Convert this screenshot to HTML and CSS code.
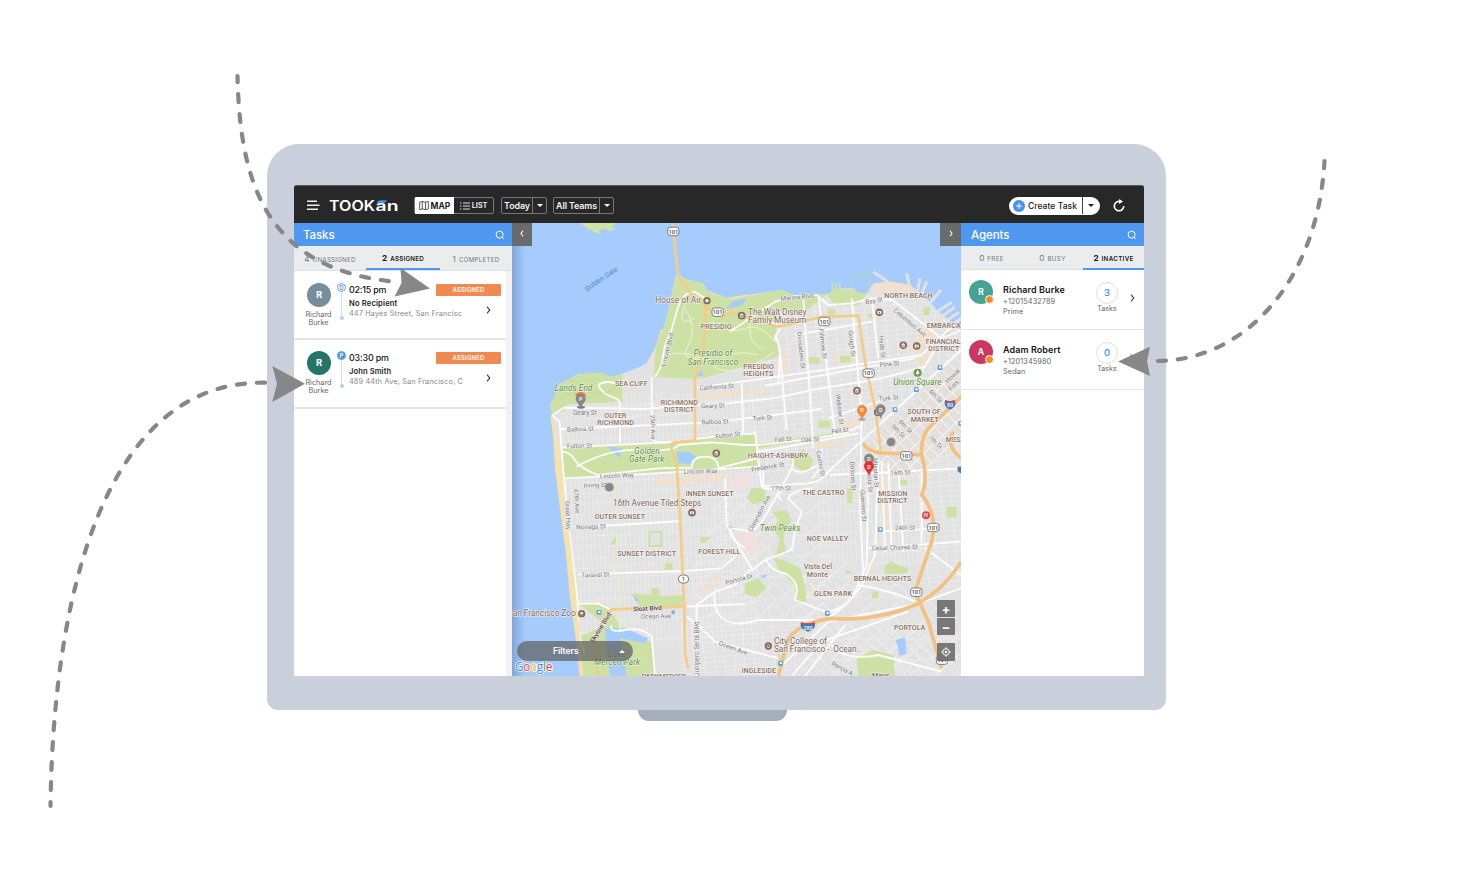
FILE: index.html
```html
<!DOCTYPE html>
<html lang="en">
<head>
<meta charset="utf-8">
<title>Tookan</title>
<link rel="stylesheet" href="styles.css">
</head>
<body>
<div class="stage">
<div class="monitor">
<div class="screen">
  <header class="topbar">
    <svg class="burger" width="13" height="11" viewBox="0 0 13 11"><path d="M0 1.2h10M0 5.2h12.5M0 9.2h11" stroke="#eee" stroke-width="1.4"/></svg>
    <svg class="logo" width="70" height="15" viewBox="0 0 70 15"><text x="0" y="13" class="logo-text" textLength="46" lengthAdjust="spacingAndGlyphs">TOOK</text><text x="46.5" y="13" class="logo-text" textLength="23" lengthAdjust="spacingAndGlyphs">an</text><path d="M47.5 5.2q1-3 4-3h6.500q-.5 2.400-3 2.700z" fill="#3f92f5"/></svg>
    <div class="toggle">
      <span class="seg on"><svg width="10" height="9" viewBox="0 0 10 9" fill="none" stroke="#333" stroke-width=".8"><path d="M.7 1.200 3.300.5v7.500l-2.600.7zM3.300.5 6.500 1.200v7.500L3.300 8M6.500 1.200 9.300.5V8l-2.800.7"/></svg>MAP</span>
      <span class="seg"><svg width="10" height="8" viewBox="0 0 10 8"><path d="M0 1h1.500M0 4h1.500M0 7h1.500M3 1h7M3 4h7M3 7h7" stroke="#ddd" stroke-width="1"/></svg>LIST</span>
    </div>
    <div class="drop today"><span>Today</span><i><b></b></i></div>
    <div class="drop teams"><span>All Teams</span><i><b></b></i></div>
    <div class="create"><svg width="12" height="12" viewBox="0 0 12 12"><circle cx="6" cy="6" r="6" fill="#4592ef"/><path d="M6 3v6M3 6h6" stroke="#fff" stroke-width="1"/></svg><span>Create Task</span><i><b></b></i></div>
    <svg class="refresh" width="12" height="13" viewBox="0 0 12 13"><path d="M10.700 7a4.700 4.700 0 1 1-4.700-4.600h2" fill="none" stroke="#fff" stroke-width="1.600"/><path d="M6 0l4 2.500L6 5z" fill="#fff"/></svg>
  </header>
  <main class="work">
    <section class="panel tasks">
      <div class="title"><h1>Tasks</h1><svg width="10" height="10" viewBox="0 0 10 10" fill="none" stroke="#fff"><circle cx="4.600" cy="4.600" r="3.500"/><path d="M7 7l2 2"/></svg></div>
      <nav class="tabs"><span>4 <small>UNASSIGNED</small></span><span class="on">2 <small>ASSIGNED</small></span><span>1 <small>COMPLETED</small></span></nav>
      <article class="task">
        <div class="who"><b class="face slate">R</b><span>Richard<br>Burke</span></div>
        <div class="rail"><em>D</em><i></i><u></u></div>
        <div class="info"><strong>02:15 pm</strong><b>No Recipient</b><span>447 Hayes Street, San Francisc</span></div>
        <div class="state"><span>ASSIGNED</span><svg width="5" height="8" viewBox="0 0 5 8"><path d="M1 .7l2.800 3.300L1 7.300" fill="none" stroke="#444" stroke-width="1.200"/></svg></div>
      </article>
      <article class="task second">
        <div class="who"><b class="face green">R</b><span>Richard<br>Burke</span></div>
        <div class="rail"><em class="full">P</em><i></i><u></u></div>
        <div class="info"><strong class="later">03:30 pm</strong><b class="john">John Smith</b><span>489 44th Ave, San Francisco, C</span></div>
        <div class="state"><span>ASSIGNED</span><svg width="5" height="8" viewBox="0 0 5 8"><path d="M1 .7l2.800 3.300L1 7.300" fill="none" stroke="#444" stroke-width="1.200"/></svg></div>
      </article>
    </section>
    <section class="mapbox">
<svg class="map" width="449" height="453" viewBox="-99 -336 1347 1359">
<defs>
<path id="land" d="M22 240L15 208 32 180 42 148 100 118 165 113 200 125 235 115 285 96 312 80 332 38 360-35 376-100 390-170 398-187 415-170 450-160 475-155 490-128 560-107 640-125 710-135 745-120 850-122 870-138 900-140 925-140 940-125 965-125 985-155 1040-160 1095-150 1135-120 1175-75 1248-15V1023H115L98 830 78 640 62 520 46 350z"/>
<pattern id="grid" width="13" height="32" patternUnits="userSpaceOnUse" patternTransform="rotate(-3)"><path d="M0 0H13M0 0V32" stroke="#f4f4f4" stroke-width="2.200"/></pattern>
<pattern id="grid2" width="30" height="15" patternUnits="userSpaceOnUse" patternTransform="rotate(-5)"><path d="M0 0H30M0 0V15" stroke="#f4f4f4" stroke-width="2.400"/></pattern>
<pattern id="soma" width="27" height="36" patternUnits="userSpaceOnUse" patternTransform="rotate(-44)"><path d="M0 0H27M0 0V36" stroke="#fcfcfc" stroke-width="4"/></pattern>
<pattern id="hill" width="74" height="62" patternUnits="userSpaceOnUse"><path d="M0 14Q25-7 40 20T74 14M13 0Q-7 28 17 42T13 62M43 62Q28 42 54 34T57 0M0 48Q37 34 74 48" fill="none" stroke="#f0f0f0" stroke-width="2.200"/></pattern>
<clipPath id="cl"><use href="#land"/></clipPath>
<g id="s101"><rect x="-17" y="-12" width="34" height="25" rx="8" fill="#fff" stroke="#666" stroke-width="2.500"/><text y="7" text-anchor="middle" class="sh">101</text></g>
<g id="tr"><rect x="-7" y="-7" width="14" height="14" rx="2" fill="#5b9be8"/><rect x="-3" y="-4" width="7" height="6" fill="#fff"/></g>
<g id="poi"><circle r="11.500" fill="#886d5d"/><path d="M-6 5h12M-5-2L0-6 5-2zM-4-1v5M0-1v5M4-1v5" stroke="#fff" stroke-width="1.700" fill="#fff"/></g>
<g id="cam"><circle r="11.500" fill="#886d5d"/><path d="M-6-3l5-2 1 2 6-1v8l-12 1z" fill="#fff"/><circle cy="1" r="2.500" fill="#886d5d"/></g>
<path id="pin" d="M0 24C-3 12-15 6-15-5A15 15 0 0 1 15-5C15 6 3 12 0 24z"/>
<linearGradient id="shade"><stop offset="0" stop-color="#426a99" stop-opacity=".38"/><stop offset="1" stop-color="#426a99" stop-opacity="0"/></linearGradient>
</defs>
<rect x="-99" y="-336" width="1347" height="1359" fill="#a6ccfd"/>
<path d="M105-336H212L200-322 215-318 195-312 178-318 160-315 170-300 150-308 130-318z" fill="#cfe3a8"/>
<path d="M15 238L24 300 30 400 45 520 62 650 75 790 95 930 104 1023H125L110 850 90 650 75 540 58 420 48 250z" fill="#f6e1ad"/>
<path d="M310 83L335 40 352-15M490-128L545-106 600-116 680-120" stroke="#f6e1ad" stroke-width="9" fill="none"/>
<use href="#land" fill="#e2e2e2"/>
<g fill="none" stroke="#e1e1e1" stroke-width="9"><path d="M985-190l45 32M1085-185l8 35M1125-170l-8 40M1145-160l-18 45M1188-135l-38 45M1220-98l-45 30M1230-84l-45 32M1242-68l-45 30M1250-50l-45 30"/></g>
<path d="M862-160v25M873-158v25M884-158v22" stroke="#cfe3a8" stroke-width="5"/>
<path d="M925-135A28 28 0 1 1 970-140" fill="none" stroke="#bcd9a5" stroke-width="3"/>
<g clip-path="url(#cl)">
<path d="M40 175H640V930H90z" fill="url(#grid)"/><path d="M590-120H1248V420H640z" fill="url(#grid2)"/><path d="M820 400H1130V690H820z" fill="url(#grid)"/><path d="M530 440H860V860H440V700z" fill="url(#hill)"/><path d="M400 860H760V1023H400zM1120 420H1248V760H1120z" fill="url(#grid2)"/><path d="M760 680H1100L1090 810 760 1023zM860 860H1248V1023H860z" fill="url(#hill)"/><path d="M850 850l390-60V1023H760z" fill="url(#soma)" opacity=".4"/>
<path d="M900 400L1248 55V300L1130 420z" fill="#e3e0dc"/><path d="M900 400L1248 55V300L1130 420z" fill="url(#soma)"/>
<g fill="#f6dfc3" opacity=".75"><path d="M990-160h120l-10 28-110 8zM560-100l130-18v14l-130 25zM1090 40l75-80 20 15-60 90zM1010 430h18v150h-18zM980 660l12 0-18 80h-12zM460 178l210-18v12l-210 22zM330 432l210-12v18l-210 12zM260 708l160-8v8l-160 8zM700 60h28v60h-28zM870 60h60v22h-60zM880 255h60v20h-60zM800 325l100-10v15l-100 12zM455 775l70-65 8 8-70 65zM1110 75l40-20 10 15-40 30z"/></g>
<path d="M545 450l25-28 50-5-10 35-35 20zM565 590l55-15 30 70-35 15-25-20zM640 290h-35v35h35zM1130 510l18-15 20 45-30 20zM90 175h45v30H90z" fill="#f1e0e2"/>
<g fill="#cee1a4">
<path d="M395-187L415-170 475-155 490-128 560-107 600-116 700-135 850-125 775-65 745-70 640-80 690-60 700 50 715 60 480 128 440 132 325 125 332 38 376-100z"/>
<path d="M845-122L870-138 975-135 940-90 870-88zM10 100H232V200L66 208 60 225 15 245z"/>
<path d="M48 337L370 322 630 292 638 400 60 430z"/>
<path d="M636 326L900 290 900 300 640 340zM100 805l80 2 55 75 85 40 10 100H110L105 905 180 870z"/>
<path d="M258 775l62 5-3-20 23-2 4 25 74-3v32l-130 12zM360 683h22v22h-22zM465 605h32l-15 18h-15zM600 745l40-15 24 30-30 28-35-12zM680 530l45-5 15 30-20 30-5 30 10 40-35 5 15-45-20-35 15-25zM685 670l30 5 50 25 18 65 0 35-30 5-5-55-45-45zM605 490l15-30 38-2 5 40-40 10zM735 365l40-20 30 30-15 35-35-10zM820 257h36v22h-36zM790 67h33v20h-33zM885 62h32v20h-32zM848-77h22v15h-22zM907 460h16v45h-16zM1020 690l18-10 50 20 0 15-70 3zM980 775l20-8 0 22-18 2zM935 970l50-25 60 15 5 63H940zM1205 515h30v32h-30zM1065 435h20v15h-20zM900 708h18v8h-18zM970-65h18v15h-18zM1135-85h20v25h-20zM1200-10h12v12h-12zM205 610h12l-8 20h-12zM720 990l-25 5 5-45z"/>
</g>
<path d="M313 591h36v42h-36z" fill="#e2e2e2" stroke="#cee1a4" stroke-width="6"/>
<path d="M190 335l20 0 20 28-10 5zM395 350l40 0 18 15-15 22-38-2zM180 880l60 0 70 30-10 15-75-15 20 112h-50l-10-80zM265 780l20 18-15 0zM545 570l30 10-20 15zM1052 915l28-8 5 50-22 5-5-30zM650 720h18l-8 8h-12zM460 115l10-10 5 18h-20zM210 340h25l-10 12h-15zM560-100l45-10-12 20-50 12z" fill="#a6ccfd"/>
<g fill="none" stroke="#edf1d8" stroke-width="3"><path d="M420-80Q460-20 430 30T480 70M360 60Q440 40 500 90T690 50M500-40Q560 0 600-20T690 20M620-60Q600 20 650 40M420-90Q390-20 450-50M520 80Q560 40 640 60"/><path d="M30 140Q80 120 120 160T220 150M45 190Q90 160 140 190" stroke="#b9cc8e" stroke-width="1.600"/></g>
<g class="w">
<path d="M20 242L56 218 300 222 380 215 545 205 700 188 800 165 1010 130 1140 95M22 242L44 260 50 350 65 520 80 650 98 800 100 890 120 960M48 282L500 262 830 222M50 338L370 322 510 305 630 295M60 430L330 415 640 395M640 330L800 312 900 295 950 270M636 350L700 340 940 295"/>
<path d="M50 350Q75 350 90 375T160 420M95 395Q190 340 290 345T400 330L500 322 600 330 640 330M160 420L340 400 440 398Q440 365 480 365T520 400L635 370"/>
<path d="M160 150q20-15 50-5M160 150Q170 175 200 185T225 215V325M320 125V300q-2 30 60 20M330 125Q350 100 355 60T375 0L395-70Q410-130 450-130L480-110M590 145l5 150M630 290l20 165 140-10Q830 440 850 410L1248 45"/>
<path d="M705 50l20 235M690 0q15 30 15 60L700 150M700 20Q680 15 700-10T660-40M775-110l30 450M820-120l50 420M920-110l30 360-5 250 10 230M980-110l20 180M555-10L690-100 780-125 815-120 850-90 920-95 980-110 1040-105M980-40L750 0M455 158L700 125 1130 60M660 152L1110 70M850 250L1060 180"/>
<path d="M1030-115L1190 10 1248-15M1130 60L1248-50M1190 10L1130 110"/>
<path d="M210 430L225 890" stroke="#e4edc9"/><path d="M90 578L410 558M98 718L420 708 530 700 570 665M100 806L160 806 200 825M540 430L545 570 590 650 620 700"/>
<path d="M620 710Q640 680 700 660L740 645 750 590 770 530 730 490Q740 465 800 460M620 700L570 750 510 770 455 810 455 1023M510 770Q500 830 540 855 570 875 640 855H830M660 670Q680 710 720 715 760 740 755 770T750 795L840 830M600 640Q550 610 560 580L620 590"/>
<path d="M655 400V460L710 465Q690 480 710 495M740 350Q750 380 740 400T680 510 620 580M740 400Q770 430 830 380M830 340Q830 410 800 430"/>
<path d="M425 845L470 880 510 920 700 970M425 815L520 810 600 808M840 835Q900 820 925 780L965 690 970 450M855 845Q920 800 950 750L990 660 1000 380M1010 380L1020 650M855 420L1248 400M970 640L1248 620M1000 590L1180 580M1030 380l10 260M1060 400l15 250M1130 400v220M1140 640L1248 720M700 1000Q780 930 850 860L1100 810M940 750Q1050 770 1110 800M740 1023L830 920 1090 830M780 1023L900 870M1110 810L1248 760M860 930Q900 980 1000 960L1190 1010M200 870Q190 895 240 885T320 905L330 1023"/>
</g>
<g class="o"><path d="M390-350L397-185Q430-120 490-80T555-70L700-25 835-55 940-58 960 80 990 220 1008 350M480-90Q485-20 470 60L450 130V315L385 322Q370 330 395 385L405 540 418 815 420 960 430 1000M418 815L200 823Q150 870 150 960L160 1023"/>
<path class="big" d="M955 325Q970 360 1060 355L1130 360Q1150 430 1130 480 1180 540 1160 620L1110 770 1150 860 1190 1000M1130 360Q1125 300 1160 270L1260 175M1248 680Q1200 760 1120 805 1000 860 860 850 770 860 730 910L700 1023M1248 370Q1200 330 1225 290"/></g>
</g>
<g class="o"><path d="M383-336L398-185"/></g>
<rect x="-99" y="-336" width="40" height="1359" fill="url(#shade)"/>
<g class="st">
<text transform="translate(125-130)rotate(-34)" class="sea" textLength="114">Golden Gate</text>
<text transform="translate(362 95)rotate(-76)">Lincoln Blvd</text><text transform="translate(707-102)rotate(-6)">Marina Blvd</text><text transform="translate(962-92)rotate(-10)">Bay St</text><text transform="translate(1044-72)rotate(40)">Columbus Ave</text>
<text transform="translate(756-8)rotate(84)">Divisadero St</text><text transform="translate(822-18)rotate(83)">Fillmore St</text><text transform="translate(910-12)rotate(84)">Gough St</text><text transform="translate(1002 4)rotate(85)">Hyde St</text>
<text transform="translate(1004 96)rotate(-5)">Pine St</text><text transform="translate(464 166)rotate(-4)">California St</text><text transform="translate(468 220)rotate(-2)">Geary St</text><text transform="translate(84 240)">Geary St</text><text transform="translate(66 290)rotate(-2)">Balboa St</text><text transform="translate(66 340)rotate(-2)">Fulton St</text><text transform="translate(470 268)rotate(-2)">Balboa St</text><text transform="translate(623 257)rotate(-4)">Turk St</text><text transform="translate(512 311)rotate(-7)">Fulton St</text><text transform="translate(1002 198)rotate(-5)">Turk St</text><text transform="translate(860 296)rotate(-7)">Fell St</text><text transform="translate(690 322)rotate(-6)">Fell St</text><text transform="translate(768 322)rotate(-4)">Oak St</text><text transform="translate(316 240)rotate(88)">25th Ave</text><text transform="translate(872 178)rotate(83)">Webster St</text><text transform="translate(165 430)rotate(-2)">Lincoln Way</text><text transform="translate(416 417)rotate(-2)">Lincoln Way</text><text transform="translate(116 458)rotate(-2)">Irving St</text><text transform="translate(620 410)rotate(-9)">Frederick St</text><text transform="translate(814 348)rotate(80)">Castro St</text><text transform="translate(678 467)rotate(-2)">17th St</text><text transform="translate(1036 420)rotate(-2)">16th St</text><text transform="translate(915 380)rotate(87)">Dolores St</text><text transform="translate(946 465)rotate(87)">Guerrero St</text><text transform="translate(984 370)rotate(87)">Mission St</text><text transform="translate(965 378)rotate(87)">Valencia St</text><text transform="translate(620 592)rotate(-62)">Clarendon Ave</text><text transform="translate(60 498)rotate(87)">Great Hwy</text><text transform="translate(86 462)rotate(86)">47th Ave</text><text transform="translate(94 583)rotate(-2)">Noriega St</text><text transform="translate(110 727)rotate(-2)">Taraval St</text><text transform="translate(1050 586)rotate(-2)">24th St</text><text transform="translate(981 646)rotate(-2)">Cesar Chavez St</text><text transform="translate(543 750)rotate(-15)">Portola Dr</text><text transform="translate(288 851)rotate(-1)">Ocean Ave</text><text transform="translate(520 930)rotate(20)">Ocean Ave</text><text transform="translate(462 1023)rotate(-90)">Junipero Serra Blvd</text><text transform="translate(858 990)rotate(28)">Persia A</text><text transform="translate(1150 170)rotate(45)">4th St</text><text transform="translate(1060 262)rotate(45)">8th St</text><text transform="translate(1038 275)rotate(45)">9th St</text><text transform="translate(1150 308)rotate(45)">7th St</text><text transform="translate(1208 146)rotate(-45)">Howar</text><text transform="translate(1218 168)rotate(-45)">Fols</text>
<text class="dark" transform="translate(265 829)rotate(-3)">Sloat Blvd</text><text class="dark" transform="translate(145 925)rotate(-58)">Skyline Blvd</text></g>
<g class="lb"><text x="331" y="-95" class="big" textLength="137">House of Air</text><text x="609" y="-61" class="big" textLength="175">The Walt Disney</text><text x="609" y="-37" class="big" textLength="175">Family Museum</text>
<text x="467" y="-18" textLength="93">PRESIDIO</text><text x="1018" y="-111" textLength="145">NORTH BEACH</text><text x="1145" y="-22" textLength="102">EMBARCA</text><text x="1142" y="27" textLength="105">FINANCIAL</text><text x="1150" y="48" textLength="93">DISTRICT</text><text x="595" y="102" textLength="92">PRESIDIO</text><text x="595" y="122" textLength="90">HEIGHTS</text><text x="210" y="153" textLength="98">SEA CLIFF</text><text x="347" y="211" textLength="112">RICHMOND</text><text x="357" y="232" textLength="90">DISTRICT</text><text x="178" y="250" textLength="66">OUTER</text><text x="157" y="271" textLength="110">RICHMOND</text><text x="1087" y="238" textLength="100">SOUTH OF</text><text x="1097" y="260" textLength="84">MARKET</text><text x="1202" y="320" textLength="45">MISS</text><text x="608" y="370" textLength="181">HAIGHT-ASHBURY</text><text x="422" y="482" textLength="144">INNER SUNSET</text><text x="772" y="479" textLength="126">THE CASTRO</text><text x="1000" y="482" textLength="87">MISSION</text><text x="997" y="503" textLength="90">DISTRICT</text><text x="149" y="551" textLength="151">OUTER SUNSET</text><text x="785" y="618" textLength="124">NOE VALLEY</text><text x="217" y="664" textLength="176">SUNSET DISTRICT</text><text x="460" y="657" textLength="126">FOREST HILL</text><text x="926" y="738" textLength="173">BERNAL HEIGHTS</text><text x="807" y="782" textLength="114">GLEN PARK</text><text x="1047" y="886" textLength="94">PORTOLA</text><text x="590" y="1015" textLength="103">INGLESIDE</text><text x="290" y="1033" textLength="135">PARKMERCED</text>
<text x="776" y="702" textLength="85">Vista Del</text><text x="785" y="725" textLength="64">Monte</text><text x="204" y="512" class="big" textLength="265">16th Avenue Tiled Steps</text><text x="-97" y="843" class="big" textLength="189">an Francisco Zoo</text><text x="687" y="927" class="big" textLength="159">City College of</text><text x="687" y="952" class="big" textLength="267">San Francisco -&#160; Ocean...</text><text x="981" y="1030">Mans</text></g>
<g class="pk"><text x="446" y="64" textLength="116">Presidio of</text><text x="428" y="90" textLength="152">San Francisco</text><text x="29" y="167" textLength="113">Lands End</text><text x="268" y="357" textLength="76">Golden</text><text x="252" y="382" textLength="106">Gate Park</text><text x="1045" y="151" textLength="144">Union Square</text><text x="644" y="589" textLength="122">Twin Peaks</text><text x="190" y="967" textLength="53">Lake</text><text x="148" y="991" textLength="137">Merced Park</text></g>
<use href="#s101" x="385" y="-311"/><use href="#s101" x="518" y="-69"/><use href="#s101" x="838" y="-41"/><use href="#s101" x="971" y="114"/><use href="#s101" x="1084" y="362"/><use href="#s101" x="1165" y="577"/><use href="#s101" x="1114" y="771"/><use href="#s101" x="1191" y="975"/>
<rect x="400" y="720" width="31" height="24" rx="12" fill="#fff" stroke="#666" stroke-width="2.500"/><text x="415" y="739" text-anchor="middle" class="sh">1</text>
<g><path d="M768 862q20 6 41 0 7 20-20 28-28-8-21-28z" fill="#4279b8"/><path d="M768 862q20 6 41 0l1 6h-43z" fill="#d5494d"/><text x="789" y="884" text-anchor="middle" class="sh inv">280</text><path d="M1200 196q15 5 30 0 6 22-15 28-21-8-15-28z" fill="#4279b8"/><path d="M1200 196q15 5 30 0v6h-30z" fill="#d5494d"/><text x="1215" y="217" text-anchor="middle" class="sh inv">80</text><path d="M1238 395h10v20q-14-5-10-20z" fill="#4279b8"/></g>
<use href="#tr" x="1114" y="164"/><use href="#tr" x="1050" y="224"/><use href="#tr" x="1185" y="98"/><use href="#tr" x="1006" y="584"/><use href="#tr" x="847" y="835"/><use href="#tr" x="707" y="985"/><use href="#tr" x="162" y="832"/><use href="#tr" x="1247" y="266"/><rect x="380" y="826" width="9" height="11" fill="#79adf5"/>
<use href="#poi" x="590" y="-58"/><use href="#cam" x="1003" y="-68"/><use href="#poi" x="1075" y="31"/><use href="#cam" x="1115" y="33"/><use href="#poi" x="514" y="355"/><use href="#poi" x="936" y="167"/><use href="#cam" x="441" y="533"/><use href="#poi" x="998" y="232"/>
<g fill="#fff" stroke="#886d5d" stroke-width="6"><circle cx="486" cy="-103" r="8"/><circle cx="110" cy="836" r="8"/><circle cx="670" cy="933" r="8"/></g><path d="M106 838h8M667 931h6l-3 5z" stroke="#886d5d" stroke-width="3"/>
<circle cx="1118" cy="113" r="12" fill="#6d9c47"/><path d="M1118 104l6 12h-12zM1117 115h2v6h-2z" fill="#fff"/>
<circle cx="1143" cy="541" r="12" fill="#d94b4b"/><text x="1143" y="547" text-anchor="middle" class="pt">H</text>
<circle cx="193" cy="457" r="15" fill="#aaa" opacity=".5"/><circle cx="193" cy="457" r="12" fill="#888"/><circle cx="1038" cy="321" r="15" fill="#aaa" opacity=".5"/><circle cx="1038" cy="321" r="12" fill="#888"/>
<ellipse cx="108" cy="217" rx="12" ry="4" fill="#777"/><path d="M93 183A16 16 0 0 1 121 183" fill="none" stroke="#f07b3a" stroke-width="7"/><use href="#pin" x="107" y="196" fill="#888"/><text x="107" y="198" text-anchor="middle" class="pt">P</text>
<ellipse cx="951" cy="253" rx="11" ry="5" fill="#aaa"/><use href="#pin" x="951" y="230" fill="#f6863a"/><text x="951" y="232" text-anchor="middle" class="pt">D</text><use href="#pin" x="1007" y="228" fill="#888"/><text x="1007" y="231" text-anchor="middle" class="pt">D</text><use href="#pin" x="972" y="376" fill="#888"/><text x="972" y="378" text-anchor="middle" class="pt">D</text><use href="#pin" x="972" y="398" fill="#e5302e"/><text x="972" y="401" text-anchor="middle" class="pt">D</text>
<text x="-91" y="1009" class="goog"><tspan fill="#4285f4">G</tspan><tspan fill="#ea4335">o</tspan><tspan fill="#fbbc05">o</tspan><tspan fill="#4285f4">g</tspan><tspan fill="#34a853">l</tspan><tspan fill="#ea4335">e</tspan></text>
</svg>
      <button class="fold left"><svg width="4" height="7" viewBox="0 0 4 7"><path d="M3 .7L1 3.500l2 2.800" fill="none" stroke="#fff" stroke-width="1.100"/></svg></button>
      <button class="fold right"><svg width="4" height="7" viewBox="0 0 4 7"><path d="M1 .7l2 2.800L1 6.300" fill="none" stroke="#fff" stroke-width="1.100"/></svg></button>
      <div class="filters"><span>Filters</span><b></b></div>
      <div class="tools"><button>+</button><button>−</button><button class="locate"><svg width="10" height="10" viewBox="0 0 10 10" fill="none" stroke="#fff"><circle cx="5" cy="5" r="3.300"/><circle cx="5" cy="5" r=".9" fill="#fff"/><path d="M5 .2v1.500M5 8.300v1.500M.2 5h1.500M8.300 5h1.500"/></svg></button></div>
    </section>
    <section class="panel agents">
      <div class="title"><h1>Agents</h1><svg width="10" height="10" viewBox="0 0 10 10" fill="none" stroke="#fff"><circle cx="4.600" cy="4.600" r="3.500"/><path d="M7 7l2 2"/></svg></div>
      <nav class="tabs"><span>0 <small>FREE</small></span><span>0 <small>BUSY</small></span><span class="on">2 <small>INACTIVE</small></span></nav>
      <article class="agent"><b class="face teal">R</b><div class="bio"><b>Richard Burke</b><span>+12015432789</span><span>Prime</span></div><div class="count"><em>3</em><span>Tasks</span></div><svg width="5" height="8" viewBox="0 0 5 8"><path d="M1 .7l2.800 3.300L1 7.300" fill="none" stroke="#555" stroke-width="1.200"/></svg></article>
      <article class="agent"><b class="face pink">A</b><div class="bio"><b>Adam Robert</b><span>+1201345980</span><span>Sedan</span></div><div class="count"><em>0</em><span>Tasks</span></div><svg width="5" height="8" viewBox="0 0 5 8"><path d="M1 .7l2.800 3.300L1 7.300" fill="none" stroke="#555" stroke-width="1.200"/></svg></article>
    </section>
  </main>
</div>
</div>
<div class="foot"></div>
<svg class="arrows" width="1478" height="876" viewBox="0 0 1478 876">
<g fill="none" stroke="#878787" stroke-width="4.200" stroke-linecap="round" stroke-dasharray="8 12"><path d="M237.500 76C240 190 270 270 397 282" stroke-dashoffset="2"/><path d="M50.500 806C53 600 103 380 265 382.700" stroke-dashoffset="4"/><path d="M1324.500 161C1318 280 1245 362 1155 361" stroke-dashoffset="1"/></g>
<g fill="#878787"><path d="M400.500 268L430 288.500 394.500 296.500 401.500 283z"/><path d="M272.300 366L305 383.700 272.300 402 277 383.500z"/><path d="M1118 361.500L1150 346.700 1147 361.500 1150 376z"/></g>
</svg>
</div>
</body>
</html>
```
FILE: styles.css
```css
*{box-sizing:border-box}
body{margin:0;background:#fff;font-family:Inter,"Open Sans",sans-serif;color:#333}
.stage{position:relative;width:1478px;height:876px;padding:144px 0 0 267px;overflow:hidden}
.monitor{width:899px;height:566px;padding:41px 22px 34px 27px;background:#cad0db;border-radius:32px 32px 11px 11px}
.screen{display:flex;flex-direction:column;width:850px;height:491px;background:#fff}
.foot{width:149px;height:11px;margin-left:371px;background:#a5afbc;border-radius:0 0 13px 13px}
.topbar{display:flex;align-items:center;height:38px;padding:2px 19px 0 13px;background:#282828;color:#f4f4f4;border-top:1px solid #58595c;border-radius:2px 2px 0 0}
.burger{margin-right:9px}
.logo{margin:-1px 15px 0 0}
.logo-text{font:600 14px Inter,sans-serif;fill:#fff}
.toggle,.drop{display:flex;height:17px;border:1px solid #777;border-radius:2px;font-size:7.500px;font-weight:600}
.toggle{width:80px;margin-right:7px}
.seg{display:flex;align-items:center;justify-content:center;gap:2px;flex:1;letter-spacing:-.2px}
.seg.on{background:#fff;color:#222;margin:-1px 0;font-size:8.500px;font-weight:700;letter-spacing:0}
.drop{align-items:center;font-size:8.900px}
.drop span{flex:1;text-align:center;white-space:nowrap;letter-spacing:-.1px}
.drop i,.create i{display:flex;align-items:center;justify-content:center;width:14px;height:15px;border-left:1px solid #777}
.drop b,.create b{border:3px solid transparent;border-top-color:#fff;border-bottom:0}
.today{width:46px;margin-right:6px}
.teams{width:61px}
.create{display:flex;align-items:center;width:91px;height:18px;margin-left:auto;padding:0 2px 0 4px;background:#fff;border-radius:9px;color:#222;font-size:8.500px;font-weight:500}
.create span{flex:1;padding-left:3px;white-space:nowrap;letter-spacing:.05px}
.create b{border-top-color:#222}
.create i{width:16px;height:17px;border-color:#444}
.refresh{margin-left:13px}
.work{display:flex;height:453px}
.panel{background:#fff}
.tasks{width:218px;background:linear-gradient(90deg,transparent 212px,#f2f2f3 212px)}
.agents{width:183px}
.title{display:flex;align-items:center;justify-content:space-between;height:23px;padding:1px 7px 0 9px;background:#4e98f0;color:#fff}
.title h1{margin:0;font-size:11.500px;font-weight:500;letter-spacing:-.1px}
.agents .title{padding-left:10px}
.tabs{display:grid;grid-template-columns:72px 74px 72px;height:25px;background:#ebecee;border-bottom:1px solid #dedfe1;font-size:8.200px;color:#777}
.tabs span{display:flex;align-items:center;justify-content:center;gap:3px;padding-top:1px;white-space:nowrap}
.tabs small{font-size:6.200px;letter-spacing:.25px;padding-top:1px}
.tabs .on{color:#181818;font-weight:700;border-bottom:2px solid #4e98f0}
.tabs .on small{font-weight:600}
.agents .tabs{grid-template-columns:61px 61px 61px;height:24px}
.agents .tabs .on{margin-bottom:-1px}
.agents .tabs small{letter-spacing:.35px}
.task{display:flex;width:212px;height:69px;padding:12px 5px 0 11px;border-bottom:2px solid #e4e4e4}
.task.second{padding-top:11px}
.who{width:30px;font-size:7.300px;line-height:8px;text-align:center;color:#666}
.who span{display:block;margin:4px 2px 0 -1px}
.face{display:flex;align-items:center;justify-content:center;position:relative;width:24px;height:24px;border-radius:50%;color:#fff;font-size:9.500px}
.who .face{margin:0 auto 0 2px}
.slate{background:#768e9c}.green{background:#267468}.teal{background:#46a294}.pink{background:#cb3763}
.rail{display:flex;flex-direction:column;align-items:center;width:13px}
.rail em{width:9px;height:9px;border:1px solid #61a4f3;border-radius:50%;color:#4e98f0;font:600 6px/7px Inter,sans-serif;text-align:center}
.rail .full{background:#438fec;color:#fff}
.rail i{width:1px;height:24px;background:#c7def9}
.rail u{width:4px;height:4px;border-radius:50%;background:#acd0fa}
.info{display:flex;flex-direction:column;width:87px;padding:1px 0 0 1px;white-space:nowrap}
.info strong{font-size:8.900px;line-height:11px;font-weight:500;color:#111;letter-spacing:-.2px}
.info .later{letter-spacing:-.15px}
.info b{margin-top:4px;font-size:7.600px;line-height:9px;font-weight:600;color:#1e1e1e;letter-spacing:.15px}
.info .john{letter-spacing:.08px}
.info span{margin-top:2px;font-size:7.300px;line-height:8px;color:#888;letter-spacing:.16px}
.state{display:flex;flex-direction:column;align-items:flex-end;width:66px}
.state span{width:65px;height:12px;margin-top:1px;border-radius:1px;background:#f18a51;color:#fff;font-size:5.800px;line-height:12px;font-weight:600;letter-spacing:.3px;text-align:center}
.state svg{margin:10px 10px 0 0;flex:none}
.agent{display:flex;align-items:flex-start;height:60px;padding:14px 9px 0 8px;border-bottom:1px solid #e5e5e5}
.agent .face{flex:none;margin-top:-2px;font-size:8.500px}
.agent .face::after{content:"";position:absolute;right:-1px;bottom:0;width:7px;height:7px;border:.5px solid #fff;border-radius:50%;background:#f38b29}
.agents .title+.tabs+.agent{padding-top:14px}
.bio{display:flex;flex:none;flex-direction:column;width:103px;padding-left:10px;font-size:7.300px;line-height:10px;color:#666}
.bio b{height:12px;margin-bottom:1px;font-size:9px;font-weight:600;color:#161616;line-height:12px;letter-spacing:.08px}
.bio span{letter-spacing:.1px}
.count{flex:none;width:22px;text-align:center;font-size:7.200px;line-height:8px;color:#666}
.count em{display:block;width:22px;height:22px;margin:-2px 0 1px;border:1px solid #e0e0e0;border-radius:50%;font:500 9.500px/20px Inter,sans-serif;color:#3d91ee}
.agent .face{margin-top:-4px}
.agent>svg{flex:none;margin:10px 0 0 12px}
.mapbox{position:relative;width:449px;height:453px;overflow:hidden}
.map{display:block}
.w{fill:none;stroke:#fdfdfd;stroke-width:5.500;stroke-linejoin:round}
.o{fill:none;stroke:#f4cb87;stroke-width:8;stroke-linejoin:round}
.o .big{stroke-width:11;stroke:#f2c180}
.st text{font:19px Roboto,sans-serif;fill:#777;stroke:#f4f4f4;stroke-width:3;paint-order:stroke}
.st .sea{font-style:italic;fill:#5480b8;stroke:none;font-size:21px}
.st .dark{fill:#4e4035;font-weight:500}
.lb text{font:500 21.500px Roboto,sans-serif;fill:#8a6d5b;stroke:#f8f8f8;stroke-width:3;paint-order:stroke}
.lb .big{font-size:25px;font-weight:400;fill:#7d6252}
.pk text{font:italic 24.500px Roboto,sans-serif;fill:#55893f;stroke:#f1f5e6;stroke-width:3;paint-order:stroke}
.sh{font:500 17px Roboto,sans-serif;fill:#444}
.sh.inv{fill:#fff;font-size:16px}
.pt{font:500 16px Roboto,sans-serif;fill:#fff}
.goog{font:500 36px "Open Sans",sans-serif;letter-spacing:-1px;stroke:#fff;stroke-width:4;paint-order:stroke}
.fold{display:flex;align-items:center;justify-content:center;position:absolute;top:0;width:21px;height:23px;padding:0 0 2px;border:0;background:#686a6b}
.left{left:-1px}.right{right:0}
.filters{position:absolute;left:5px;top:418px;display:flex;align-items:center;width:116px;height:20px;padding:0 8px 0 36px;border-radius:10px;background:rgba(95,95,95,.72);color:#fff;font-size:8.500px;font-weight:600}
.filters span{flex:1}
.filters b{border:3px solid transparent;border-bottom-color:#fff;border-top:0}
.tools{position:absolute;left:425px;top:377px;display:flex;flex-direction:column;gap:1px}
.tools button{display:flex;align-items:center;justify-content:center;width:18px;height:17px;padding:0;border:0;border-radius:1px;background:rgba(105,105,105,.88);color:#fff;font:700 13px Inter,sans-serif}
.tools .locate{height:18px;margin-top:7px}
.arrows{position:absolute;left:0;top:0;pointer-events:none}
```
